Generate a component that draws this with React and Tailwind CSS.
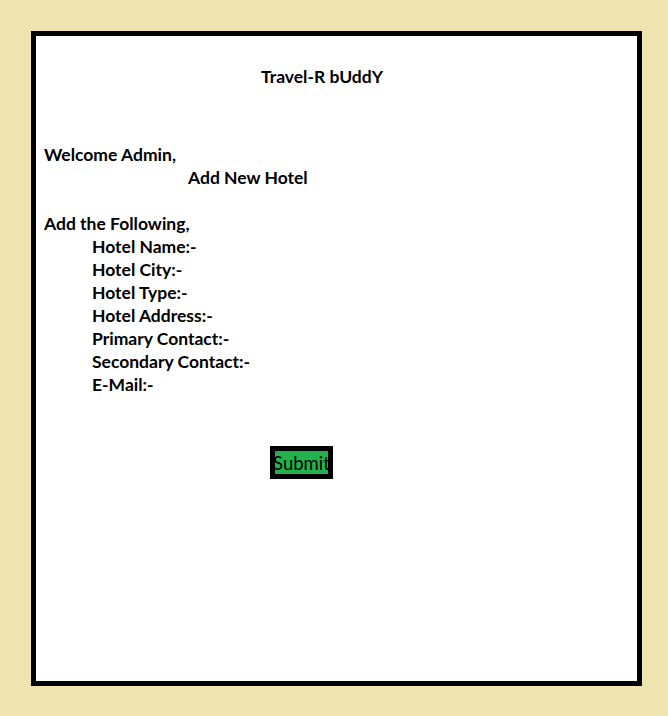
export default function App() {
  const fields = [
    'Hotel Name:-',
    'Hotel City:-',
    'Hotel Type:-',
    'Hotel Address:-',
    'Primary Contact:-',
    'Secondary Contact:-',
    'E-Mail:-'
  ]

  return (
    <div className="w-[668px] h-[716px] bg-[#efe4b0] pt-[31px] pl-[31px]" style={{ fontFamily: 'Lato, "Open Sans", sans-serif' }}>
      <div className="w-[611px] h-[655px] border-[5px] border-black bg-white pl-[8px] pt-[29px] text-black font-bold text-[17.5px] leading-[23px]">
        <div className="ml-[217px]">Travel-R bUddY</div>
        <div className="mt-[55px]">Welcome Admin,</div>
        <div className="ml-[144px]">Add New Hotel</div>
        <div className="mt-[23px]">Add the Following,</div>
        <div className="pl-[48px]">
          {fields.map((f) => (
            <div key={f}>{f}</div>
          ))}
        </div>
        <div className="mt-[50px] ml-[226px]">
          <button className="w-[63px] h-[33px] border-[5px] border-black bg-[#22b14c] font-normal text-[18.5px] leading-[22px] px-0 flex items-center justify-center overflow-visible whitespace-nowrap">
            Submit
          </button>
        </div>
      </div>
    </div>
  )
}
